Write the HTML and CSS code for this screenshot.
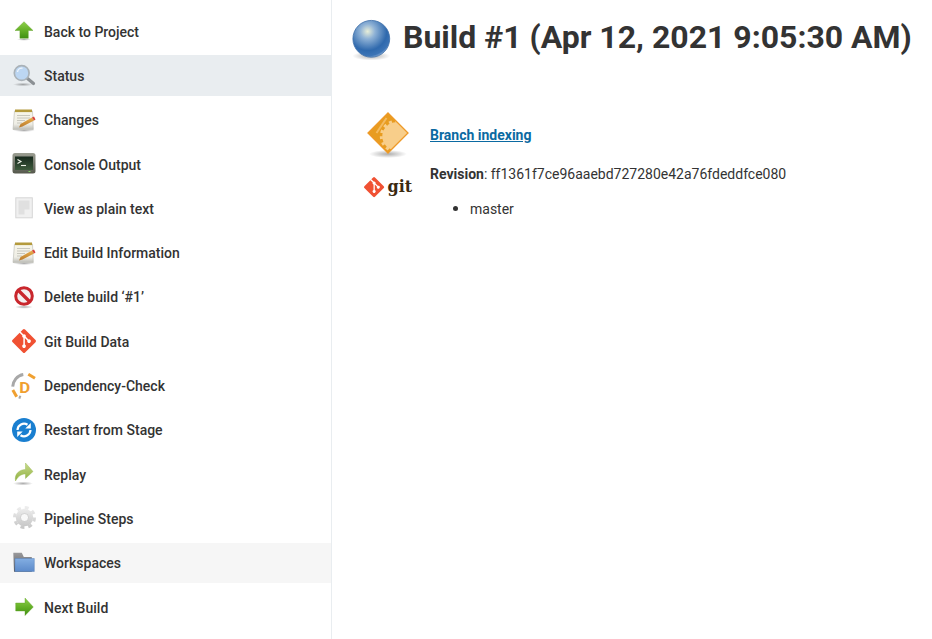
FILE: index.html
```html
<!DOCTYPE html>
<html lang="en">
<head>
<meta charset="utf-8">
<title>Build #1</title>
<link rel="stylesheet" href="styles.css">
</head>
<body>
<svg class="defs" width="0" height="0"><defs>
  <linearGradient id="green" x1="0" y1="0" x2="0" y2="1"><stop offset="0" stop-color="#8ed04a"/><stop offset=".55" stop-color="#62ae25"/><stop offset="1" stop-color="#3f8f12"/></linearGradient>
  <linearGradient id="paper" x1="0" y1="0" x2="0" y2="1"><stop offset="0" stop-color="#f8f6ea"/><stop offset=".7" stop-color="#efeee6"/><stop offset="1" stop-color="#bcbcb6"/></linearGradient>
  <linearGradient id="bezel" x1="0" y1="0" x2="0" y2="1"><stop offset="0" stop-color="#9b9e92"/><stop offset="1" stop-color="#55584c"/></linearGradient>
  <linearGradient id="screen" x1="0" y1="0" x2="0" y2="1"><stop offset="0" stop-color="#16281c"/><stop offset="1" stop-color="#3d5a3c"/></linearGradient>
  <linearGradient id="replay" x1="0" y1="0" x2="0" y2="1"><stop offset="0" stop-color="#c9db8c"/><stop offset="1" stop-color="#8fb040"/></linearGradient>
  <linearGradient id="gear" x1="0" y1="0" x2="0" y2="1"><stop offset="0" stop-color="#ececec"/><stop offset="1" stop-color="#c8c8c8"/></linearGradient>
  <linearGradient id="folder" x1="0" y1="0" x2="0" y2="1"><stop offset="0" stop-color="#83aee2"/><stop offset="1" stop-color="#5c8aca"/></linearGradient>
  <linearGradient id="tab" x1="0" y1="0" x2="0" y2="1"><stop offset="0" stop-color="#9a9a9c"/><stop offset="1" stop-color="#55575c"/></linearGradient>
  <linearGradient id="pencil" x1="0" y1="0" x2="0" y2="1"><stop offset="0" stop-color="#eab04c"/><stop offset="1" stop-color="#b8782a"/></linearGradient>
  <radialGradient id="shade"><stop offset="0" stop-color="#000" stop-opacity=".32"/><stop offset="1" stop-color="#000" stop-opacity="0"/></radialGradient>
  <radialGradient id="ballfill" cx=".4" cy=".3" r=".72"><stop offset="0" stop-color="#e8eed8"/><stop offset=".28" stop-color="#8fb2d6"/><stop offset=".72" stop-color="#2f69ad"/><stop offset=".92" stop-color="#3c74b6"/><stop offset="1" stop-color="#7ea4d2"/></radialGradient>
  <clipPath id="dclip"><path d="M24 1 44 21 24 41 4 21z"/></clipPath>
  <g id="note"><ellipse cx="12" cy="22.500" rx="11" ry="1.500" fill="url(#shade)"/><path d="M2.500 3h18l.8 18.500H1z" fill="url(#paper)" stroke="#b9b9b0" stroke-width=".6"/><rect x="3" y="1.500" width="17" height="2.600" fill="#b49a3c"/><path d="M5 7.500h13M5 10h13M5 12.500h8M5 15h5" stroke="#bdbdb2" stroke-width=".8"/><path d="M7 19.500 8.500 16 20 9.500 22 12.500 10.500 18.500z" fill="url(#pencil)"/><path d="M20 9.500 22 12.500 23.500 11.500 22 8.500z" fill="#d8443a"/></g>
  <g id="gitmark"><path transform="scale(.2609)" d="M90.156 41.965 50.036 1.848a5.918 5.918 0 0 0-8.372 0l-8.328 8.332 10.566 10.566a7.03 7.03 0 0 1 7.23 1.684 7.034 7.034 0 0 1 1.669 7.277l10.187 10.184a7.028 7.028 0 0 1 7.278 1.672 7.04 7.04 0 0 1 0 9.957 7.05 7.05 0 0 1-9.965 0 7.044 7.044 0 0 1-1.528-7.66l-9.5-9.497V59.36a7.04 7.04 0 0 1 1.86 11.29 7.04 7.04 0 0 1-9.957 0 7.04 7.04 0 0 1 0-9.958 7.06 7.06 0 0 1 2.304-1.539V33.926a7.049 7.049 0 0 1-3.82-9.234L29.242 14.272 1.730 41.777a5.925 5.925 0 0 0 0 8.371L41.852 90.270a5.925 5.925 0 0 0 8.370 0l39.934-39.934a5.925 5.925 0 0 0 0-8.371" fill="#f05133"/></g>
</defs></svg>
<div class="page">
<aside class="side">
  <a class="task"><svg class="ico" viewBox="0 0 24 24"><ellipse cx="12" cy="20.500" rx="7" ry="1.300" fill="url(#shade)"/><path d="M12 2.700 21 11.500h-4.700v7.800H7.900v-7.800H3z" fill="url(#green)" stroke="#5ea024" stroke-width=".4"/></svg><span>Back to Project</span></a>
  <a class="task current"><svg class="ico" viewBox="0 0 24 24"><ellipse cx="11" cy="21.500" rx="10" ry="1.800" fill="url(#shade)"/><path d="M15.500 15.500 21.500 20.500" stroke="#8b9094" stroke-width="3.200" stroke-linecap="round"/><circle cx="9.700" cy="10" r="7.400" fill="#bcd6f2" stroke="#aab2b8" stroke-width="1.700"/><path d="M5.500 9a4.500 4.500 0 0 1 5-3.800" stroke="#eef5fc" stroke-width="1.400" fill="none"/></svg><span>Status</span></a>
  <a class="task"><svg class="ico" viewBox="0 0 24 24"><use href="#note"/></svg><span>Changes</span></a>
  <a class="task"><svg class="ico" viewBox="0 0 24 24"><rect x=".5" y="1" width="23" height="20.500" rx="2.500" fill="url(#bezel)"/><rect x="3" y="4.500" width="18" height="13.500" fill="url(#screen)"/><path d="M5.500 7.500 9 9.500 5.500 11.500" fill="none" stroke="#eef2e8" stroke-width="1.100"/><path d="M9 13.500h5" stroke="#eef2e8" stroke-width="1.100"/><rect x="16.500" y="19" width="2" height="1" fill="#7ed060"/></svg><span>Console Output</span></a>
  <a class="task"><svg class="ico" viewBox="0 0 24 24"><rect x="3.800" y="1.800" width="16.500" height="20" fill="#f0f0f0" stroke="#d6d6d6"/><path d="M6.500 4.500h11v9h-5v5h-6z" fill="#e0e0e0"/></svg><span>View as plain text</span></a>
  <a class="task"><svg class="ico" viewBox="0 0 24 24"><use href="#note"/></svg><span>Edit Build Information</span></a>
  <a class="task"><svg class="ico" viewBox="0 0 24 24"><ellipse cx="12" cy="22" rx="9" ry="1.800" fill="url(#shade)"/><circle cx="12" cy="11" r="8.300" fill="#f4f0f0" stroke="#c9272d" stroke-width="3"/><path d="M6 5 18 17" stroke="#c9272d" stroke-width="3.400"/></svg><span>Delete build ‘#1’</span></a>
  <a class="task"><svg class="ico" viewBox="0 0 24 24"><use href="#gitmark"/></svg><span>Git Build Data</span></a>
  <a class="task"><svg class="ico" viewBox="0 0 24 24"><g fill="none" stroke-width="3"><path d="M.8 16 4.700 22.700" stroke="#f0a030"/><path d="M.7 12.700C1 7 5 1.500 11.300 .5" stroke="#a8a8a8"/><path d="M16.300 .3 23 4.300" stroke="#f0a030"/><path d="M8.800 23.500 6.800 22.800" stroke="#a8a8a8"/></g><text x="7.500" y="18.700" class="d-mark" transform="translate(-1.700 0) scale(1.200 1)">D</text></svg><span>Dependency-Check</span></a>
  <a class="task"><svg class="ico" viewBox="0 0 24 24"><circle cx="12" cy="12" r="12" fill="#1a7fd0"/><g fill="none" stroke="#fff" stroke-width="2.200"><path d="M5.500 12A6.500 6.500 0 0 1 15.500 6.800"/><path d="M18.500 12A6.500 6.500 0 0 1 8.500 17.200"/></g><path d="M18.800 5v5.500h-5.500zM5.200 19v-5.500h5.500z" fill="#fff"/></svg><span>Restart from Stage</span></a>
  <a class="task"><svg class="ico" viewBox="0 0 24 24"><ellipse cx="11" cy="21.500" rx="10" ry="2" fill="url(#shade)"/><path d="M3.500 19C2 11.500 8 7.500 13.500 7.500V1L21 9.500 13.500 16.500v-4.500C9 12 6 14.500 3.500 19z" fill="url(#replay)" stroke="#93b24a" stroke-width=".4"/></svg><span>Replay</span></a>
  <a class="task"><svg class="ico" viewBox="0 0 24 24"><circle cx="12.500" cy="11.500" r="8.700" fill="url(#gear)"/><circle cx="12.500" cy="11.500" r="10" fill="none" stroke="url(#gear)" stroke-width="3" stroke-dasharray="3.900 3.950"/><circle cx="12.500" cy="11.500" r="4" fill="#f8f8f8" stroke="#b4b4b4" stroke-width=".5"/></svg><span>Pipeline Steps</span></a>
  <a class="task hover"><svg class="ico" viewBox="0 0 24 24"><path d="M1.300 1.700h8.500l2 4.300h8v14.700H2z" fill="url(#tab)"/><path d="M3 7.500h19.300v13H3z" fill="url(#folder)" stroke="#5b83b8" stroke-width=".5"/></svg><span>Workspaces</span></a>
  <a class="task"><svg class="ico" viewBox="0 0 24 24"><path d="M3.700 8h9.300V3l8.300 9L13 20.500V16H3.700z" fill="url(#green)" stroke="#5ea024" stroke-width=".4"/></svg><span>Next Build</span></a>
</aside>
<main class="main">
  <h1 class="title"><svg class="ball" viewBox="0 0 40 42"><ellipse cx="19.300" cy="37" rx="19" ry="4.500" fill="url(#shade)"/><circle cx="19.300" cy="19.800" r="18.400" fill="url(#ballfill)" stroke="#3d6ea8" stroke-width=".8"/></svg><span>Build #1 (Apr 12, 2021 9:05:30 AM)</span></h1>
  <div class="rows">
    <div class="icons">
      <svg class="diamond" viewBox="0 0 48 48"><ellipse cx="24" cy="42" rx="19" ry="4" fill="url(#shade)"/><path d="M24 1 44 21 24 41 4 21z" fill="#e89c20"/><g clip-path="url(#dclip)"><path d="M12.500 21 22.500 6" stroke="#f4bb60" stroke-width="2"/><circle cx="32.300" cy="24.300" r="14" fill="#f8ce8a"/><circle cx="32.300" cy="24.300" r="15" fill="none" stroke="#f8ce8a" stroke-width="3" stroke-dasharray="3 3.280"/></g><path d="M24 1 44 21 24 41 4 21z" fill="none" stroke="#ee9a28" stroke-width="1.300"/></svg>
      <svg class="gitlogo" viewBox="0 0 48 20"><use href="#gitmark" transform="scale(.84)"/><text x="23.500" y="14.700" class="gitword">git</text></svg>
    </div>
    <div class="info">
      <p class="line"><a class="link">Branch indexing</a></p>
      <p class="line rev"><b>Revision</b>: ff1361f7ce96aaebd727280e42a76fdeddfce080</p>
      <ul class="branches"><li>master</li></ul>
    </div>
  </div>
</main>
</div>
</body>
</html>
```
FILE: styles.css
```css
* { box-sizing: border-box; }
html, body { margin: 0; height: 100%; background: #fff; overflow: hidden; }
body { font-family: Roboto, "Liberation Sans", sans-serif; font-size: 14px; color: #333; }
.defs { position: absolute; }
.page { display: flex; height: 639px; }
.side {
  width: 332px;
  flex: none;
  border-right: 1px solid #e9edf0;
  padding-top: 11px;
  display: flex;
  flex-direction: column;
  gap: 4px;
}
.task {
  height: 40.3px;
  flex: none;
  display: flex;
  align-items: center;
  gap: 8px;
  padding-left: 12px;
  font-weight: 500;
  color: #333;
}
.task span { padding-top: 1px; }
.task.current { background: #e9edf0; }
.task.hover { background: #f6f6f6; }
.ico { width: 24px; height: 24px; flex: none; overflow: visible; }
.d-mark { font: 700 14px Roboto, sans-serif; fill: #f0a030; }
.main { flex: 1; padding: 16px 0 0 20px; min-width: 0; }
.title {
  margin: 0;
  display: flex;
  align-items: flex-start;
  gap: 11px;
  font-size: 32px;
  font-weight: 700;
  line-height: 42px;
  color: #333;
  white-space: nowrap;
}
.ball { width: 40px; height: 42px; flex: none; margin-top: 3px; }
.rows { display: flex; margin-top: 51px; padding-left: 12px; }
.icons { width: 66px; flex: none; display: flex; flex-direction: column; }
.diamond { width: 48px; height: 48px; display: block; }
.gitlogo { width: 48px; height: 20px; display: block; margin-top: 17px; overflow: visible; }
.gitword { font: 700 16px "DejaVu Serif", serif; fill: #3b2a10; }
.info { min-width: 0; padding-top: 13px; }
.line { margin: 0; line-height: 20px; }
.rev { margin-top: 19px; }
.rev b { font-weight: 700; }
.link { color: #0b6aa2; font-weight: 700; text-decoration: underline; }
.branches { margin: 15px 0 0; padding-left: 40px; line-height: 20px; list-style: none; }
.branches li { position: relative; }
.branches li::before {
  content: "";
  position: absolute;
  left: -17px;
  top: 7px;
  width: 5px;
  height: 5px;
  border-radius: 50%;
  background: #333;
}
```
